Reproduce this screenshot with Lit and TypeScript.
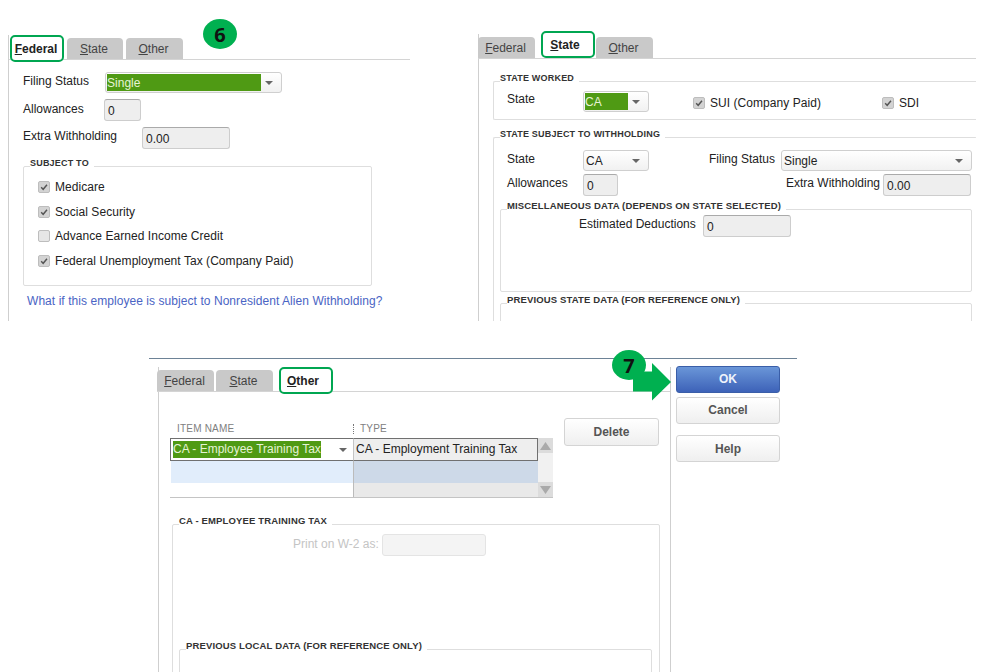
import { LitElement, html, css, svg } from "lit";
import { customElement } from "lit/decorators.js";

const caret = html`<svg class="caret" width="8" height="4" viewBox="0 0 8 4"><path d="M0 0h8L4 4z" fill="#666"/></svg>`;
const tick = svg`<path d="M2.6 6.4 5 8.8 9.600 3.4" fill="none" stroke="#555" stroke-width="1.7"/>`;

@customElement("app-root")
export class AppRoot extends LitElement {
  static styles = css`
    :host { display: block; position: relative; width: 999px; height: 672px; overflow: hidden; background: #fff;
      font: 12px "Liberation Sans", Arial, sans-serif; color: #222; }
    * { box-sizing: border-box; }

    .top { display: flex; height: 321px; padding-top: 35px; }
    .panel { display: flex; flex-direction: column; border-left: 1px solid #cfcfcf; }
    .p-fed { margin-left: 8px; width: 402px; }
    .p-state { margin-left: 68px; width: 498px; margin-top: -1px; }

    .tabs { display: flex; align-items: flex-end; flex: none; height: 25px; border-bottom: 1px solid #d4d4d4; }
    .tab { width: 57px; height: 21px; display: flex; align-items: center; justify-content: center; padding-right: 2px;
      background: #c9c9c9; border-radius: 4px 4px 0 0; color: #444; }
    .tab.on { width: 54px; height: 27px; margin-bottom: -3px; background: #fff; border: 2px solid #00a651;
      border-radius: 5px; font-weight: bold; color: #222; padding-right: 6px; }
    .t-fed { padding-left: 1px; gap: 3px; }
    .t-fed .tab.on { padding-right: 2px; }
    .t-fed .tab:nth-child(2) { width: 56px; }
    .t-state { margin-left: -1px; }
    .t-state .tab:nth-child(2) { margin: 0 1px 0 6px; }
    .t-other { margin-left: -2px; gap: 2px; }
    .t-other .tab.on { margin-left: 4px; }

    .row { display: flex; align-items: center; }
    .lbl { flex: none; padding-bottom: 4px; white-space: nowrap; }

    .sel { flex: none; height: 21px; display: flex; align-items: center; padding: 0 1px; background: linear-gradient(#fff, #f1f1f1);
      border: 1px solid #cfcfcf; border-radius: 3px; position: relative; }
    .sel .val { padding-left: 1px; }
    .sel .hi { height: 17px; display: flex; align-items: center; background: #4f9a14; color: #e6f3d4; }
    .caret { position: absolute; right: 8px; top: 8px; }
    .inp { flex: none; height: 22px; display: flex; align-items: center; padding: 1px 0 0 3px; background: #eee; border: 1px solid #cdcdcd;
      border-top-color: #aaa; border-radius: 3px; }

    .group { position: relative; border: 1px solid #dedede; border-radius: 2px; flex: none; }
    .legend { position: absolute; top: -11px; left: 6px; padding: 0 5px 0 0; background: #fff; font-size: 9px; font-weight: bold;
      line-height: 14px; color: #333; white-space: nowrap; letter-spacing: .2px; }
    .legend.wide { font-size: 9.5px; letter-spacing: .15px; }

    .chk { display: flex; align-items: center; gap: 5px; white-space: nowrap; letter-spacing: .05px; }
    .box { width: 12px; height: 12px; flex: none; display: block; background: #d3d3d3; border: 1px solid #bdbdbd; border-radius: 2px; }
    .box.off { background: #e6e6e6; }

    /* Federal */
    .fed-body { padding: 12px 0 0 14px; }
    .fed-body .row + .row { margin-top: 6px; }
    .sel.s-fed { width: 177px; margin-left: 16px; }
    .sel.s-fed .hi { width: 154px; }
    .lb-allow { width: 81px; padding-bottom: 2px; }
    .lb-extra { width: 119px; }
    .i-allow { width: 37px; }
    .i-extra { width: 88px; }
    .g-subj { width: 349px; height: 120px; margin-top: 17px; padding: 13px 0 0 14px; display: flex; flex-direction: column; gap: 10.6px; }
    .link { margin: 8px 0 0 4px; color: #4a64c4; letter-spacing: .06px; white-space: nowrap; }

    /* State */
    .st-body { flex: 1; min-height: 0; overflow: hidden; padding: 22px 0 0 14px; }
    .g-worked { width: 484px; height: 39px; border-right: 0; padding: 9px 0 0 13px; display: flex; align-items: flex-start; border-radius: 2px 0 0 2px; }
    .lb-st { width: 76px; }
    .sel.s-ca { width: 66px; }
    .sel.s-ca .hi { width: 43px; }
    .g-worked .lb-st { height: 15px; display: flex; align-items: center; padding: 0; }
    .g-worked .chk { margin-top: 5px; }
    .c-sui { margin-left: 44px; width: 189px; }
    .g-with { width: 484px; height: 200px; margin-top: 17px; border-right: 0; border-bottom: 0; padding: 12px 0 0 6px; }
    .g-with > .row { padding-left: 7px; }
    .g-with > .row + .row { margin-top: 3px; }
    .lb-fs { width: 72px; margin-left: 60px; }
    .sel.s-fs { width: 191px; }
    .i-st { width: 35px; }
    .lb-ew { width: 97px; margin-left: 168px; }
    .g-misc { width: 472px; height: 83px; margin-top: 13px; padding: 5px 0 0 78px; }
    .lb-est { width: 124px; }
    .g-prev { width: 472px; height: 60px; margin-top: 11px; }

    /* Other */
    .bottom { margin: 37px 0 0 149px; width: 648px; height: 314px; border-top: 1px solid #6d8296; display: flex; overflow: hidden; padding-left: 9px; }
    .p-other { width: 513px; flex: none; height: 400px; margin-top: 8px; border-right: 1px solid #cfcfcf; }
    .oth-body { padding: 26px 0 0 11px; }
    .item-row { display: flex; align-items: flex-start; }
    .tbl-wrap { width: 383px; flex: none; }
    .heads { height: 21px; display: grid; grid-template-columns: 183px 1fr; align-items: center; font-size: 10px; color: #808080; letter-spacing: .2px; margin-bottom: -1px; }
    .heads span { padding-left: 7px; position: relative; }
    .heads span + span { border-left: 1px dotted #777; height: 10px; line-height: 10px; padding-left: 6px; }
    .tbl { position: relative; display: grid; grid-template-columns: 183px 185px 15px; grid-template-rows: 23px 22px 14px; border-bottom: 1px solid #c4c4c4; }
    .cell { display: flex; align-items: center; position: relative; }
    .c1 { border: 1px solid #707070; border-right: 0; background: #fff; padding: 0 0 1px 2px; }
    .c1 .hi { background: #4f9a14; color: #e6f3d4; height: 17px; width: 148px; display: flex; align-items: center; white-space: nowrap; }
    .c1 .caret { top: 9px; right: 6px; }
    .c2 { border: 1px solid #707070; border-left: 1px solid #c4c4c4; background: #eee; padding: 0 0 1px 2px; white-space: nowrap; }
    .r2a { background: #e1edfb; margin-left: 1px; }
    .r2b { background: #cdd9e8; border-left: 1px solid #bbb; }
    .r3a { background: #fff; }
    .r3b { background: #e9e9e9; border-left: 1px solid #bbb; }
    .scroll { grid-column: 3; grid-row: 1 / 4; display: flex; flex-direction: column; justify-content: space-between; background: #f1f1f1; }
    .arr { height: 15px; background: #dcdcdc; display: flex; align-items: center; justify-content: center; }
    .btn { display: flex; align-items: center; justify-content: center; font-weight: bold; color: #555; border: 1px solid #d4d4d4;
      border-radius: 3px; background: linear-gradient(#fff, #efefef); height: 27px; flex: none; padding-bottom: 1px; }
    .del { width: 95px; height: 28px; margin-left: 11px; padding: 0; }
    .g-item { width: 488px; height: 200px; margin: 26px 0 0 2px; padding: 9px 0 0 6px; }
    .print { padding-left: 114px; color: #c4c4c4; }
    .print .lbl { width: 89px; padding-bottom: 2px; }
    .i-print { width: 104px; background: #f4f4f4; border-color: #e4e4e4; }
    .g-local { width: 473px; height: 60px; margin-top: 93px; }
    .actions { margin: 7px 0 0 5px; display: flex; flex-direction: column; gap: 4px; width: 104px; flex: none; }
    .ok { background: linear-gradient(#6a96d8, #3d62b8); border-color: #3a5ea8; color: #eef3fb; }
    .help { margin-top: 7px; padding: 0; }

    .badge { position: absolute; width: 34px; height: 30px; border-radius: 50%; background: #00b050; color: #111;
      display: flex; align-items: center; justify-content: center; font: bold 20px "Open Sans", sans-serif; }
    .b6 { left: 203px; top: 19px; }
    .b7 { left: 612px; top: 350px; }
    .arrow { position: absolute; left: 633px; top: 363px; }
  `;

  private tabs(active: string, cls: string) {
    const names: [string, string][] = [["F", "ederal"], ["S", "tate"], ["O", "ther"]];
    return html`<div class="tabs ${cls}">
      ${names.map(([a, b]) => html`<div class="tab ${a === active ? "on" : ""}"><u>${a}</u>${b}</div>`)}
    </div>`;
  }

  private check(label: string, on = true, cls = "") {
    return html`<div class="chk ${cls}">
      <svg class="box ${on ? "" : "off"}" viewBox="0 0 12 12">${on ? tick : ""}</svg>${label}
    </div>`;
  }

  render() {
    return html`
      <div class="top">
        <section class="panel p-fed">
          ${this.tabs("F", "t-fed")}
          <div class="fed-body">
            <div class="row">
              <span class="lbl">Filing Status</span>
              <div class="sel s-fed"><span class="hi">Single</span>${caret}</div>
            </div>
            <div class="row">
              <span class="lbl lb-allow">Allowances</span>
              <div class="inp i-allow">0</div>
            </div>
            <div class="row">
              <span class="lbl lb-extra">Extra Withholding</span>
              <div class="inp i-extra">0.00</div>
            </div>
            <div class="group g-subj">
              <span class="legend">SUBJECT TO</span>
              ${this.check("Medicare")}
              ${this.check("Social Security")}
              ${this.check("Advance Earned Income Credit", false)}
              ${this.check("Federal Unemployment Tax (Company Paid)")}
            </div>
            <div class="link">What if this employee is subject to Nonresident Alien Withholding?</div>
          </div>
        </section>

        <section class="panel p-state">
          ${this.tabs("S", "t-state")}
          <div class="st-body">
            <div class="group g-worked">
              <span class="legend">STATE WORKED</span>
              <span class="lbl lb-st">State</span>
              <div class="sel s-ca"><span class="hi">CA</span>${caret}</div>
              ${this.check("SUI (Company Paid)", true, "c-sui")}
              ${this.check("SDI")}
            </div>
            <div class="group g-with">
              <span class="legend">STATE SUBJECT TO WITHHOLDING</span>
              <div class="row">
                <span class="lbl lb-st">State</span>
                <div class="sel s-ca"><span class="val">CA</span>${caret}</div>
                <span class="lbl lb-fs">Filing Status</span>
                <div class="sel s-fs"><span class="val">Single</span>${caret}</div>
              </div>
              <div class="row">
                <span class="lbl lb-st">Allowances</span>
                <div class="inp i-st">0</div>
                <span class="lbl lb-ew">Extra Withholding</span>
                <div class="inp i-extra">0.00</div>
              </div>
              <div class="group g-misc">
                <span class="legend wide">MISCELLANEOUS DATA (DEPENDS ON STATE SELECTED)</span>
                <div class="row">
                  <span class="lbl lb-est">Estimated Deductions</span>
                  <div class="inp i-extra">0</div>
                </div>
              </div>
              <div class="group g-prev">
                <span class="legend wide">PREVIOUS STATE DATA (FOR REFERENCE ONLY)</span>
              </div>
            </div>
          </div>
        </section>
      </div>

      <div class="bottom">
        <section class="panel p-other">
          ${this.tabs("O", "t-other")}
          <div class="oth-body">
            <div class="item-row">
              <div class="tbl-wrap">
                <div class="heads"><span>ITEM NAME</span><span>TYPE</span></div>
                <div class="tbl">
                  <div class="cell c1"><span class="hi">CA - Employee Training Tax</span>${caret}</div>
                  <div class="cell c2">CA - Employment Training Tax</div>
                  <div class="scroll">
                    <div class="arr"><svg width="11" height="8" viewBox="0 0 11 8"><path d="M5.5 0 11 8H0z" fill="#aaa"/></svg></div>
                    <div class="arr"><svg width="11" height="8" viewBox="0 0 11 8"><path d="M0 0h11L5.5 8z" fill="#aaa"/></svg></div>
                  </div>
                  <div class="cell r2a"></div><div class="cell r2b"></div>
                  <div class="cell r3a"></div><div class="cell r3b"></div>
                </div>
              </div>
              <div class="btn del">Delete</div>
            </div>
            <div class="group g-item">
              <span class="legend wide">CA - EMPLOYEE TRAINING TAX</span>
              <div class="row print">
                <span class="lbl">Print on W-2 as:</span>
                <div class="inp i-print"></div>
              </div>
              <div class="group g-local">
                <span class="legend wide">PREVIOUS LOCAL DATA (FOR REFERENCE ONLY)</span>
              </div>
            </div>
          </div>
        </section>
        <div class="actions">
          <div class="btn ok">OK</div>
          <div class="btn">Cancel</div>
          <div class="btn help">Help</div>
        </div>
      </div>

      <div class="badge b6">6</div>
      <svg class="arrow" width="39" height="38" viewBox="0 0 39 38"><path d="M0 8.500h19V0l19 19-19 18.500v-9H0z" fill="#00b050"/></svg>
      <div class="badge b7">7</div>
    `;
  }
}
